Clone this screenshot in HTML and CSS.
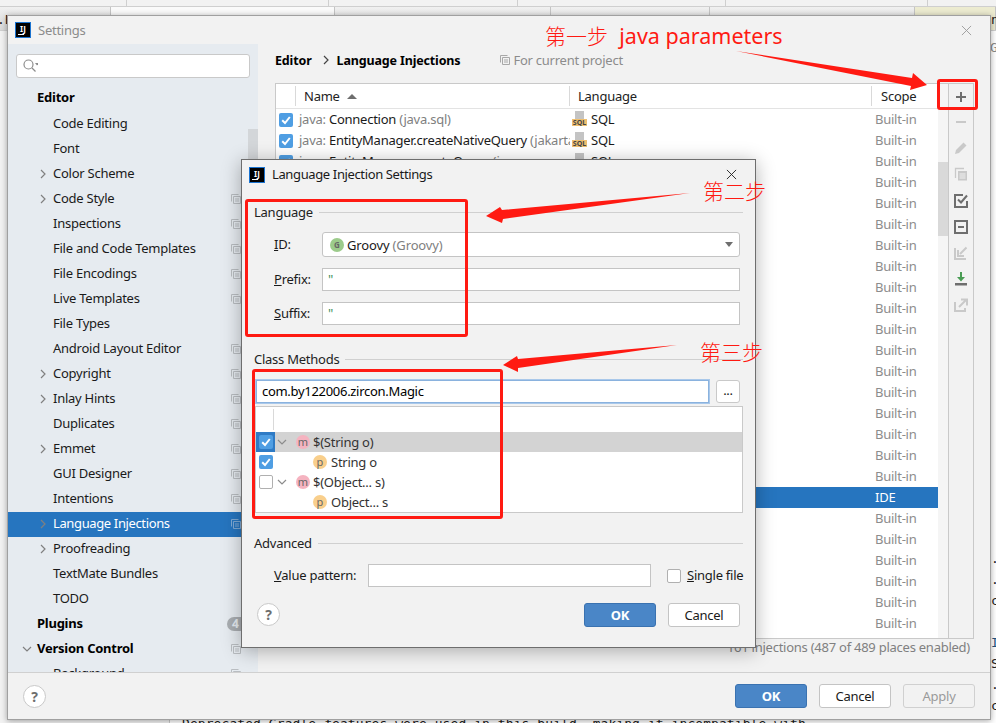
FILE: index.html
```html
<!DOCTYPE html>
<html lang="en">
<head>
    <meta charset="UTF-8">
    <meta name="viewport" content="width=device-width, initial-scale=1.0">
    <title>Language Injection Settings</title>
    <link rel="stylesheet" href="styles.css">
</head>
<body>
<svg class="defs" width="0" height="0">
    <symbol id="proj" viewBox="0 0 10 10"><path d="M.5 7.5V.5h7M2.500 2.500h7v7h-7zM4 5h4M4 7h4" fill="none" stroke="currentColor"/></symbol>
    <symbol id="right" viewBox="0 0 10 10"><path d="M3 1l4 4-4 4" fill="none" stroke="currentColor" stroke-width="1.2"/></symbol>
    <symbol id="down" viewBox="0 0 10 10"><path d="M1 3l4 4 4-4" fill="none" stroke="currentColor" stroke-width="1.2"/></symbol>
    <symbol id="tick" viewBox="0 0 14 14"><path d="M3.2 7.2l2.8 2.8 4.8-6" fill="none" stroke="#fff" stroke-width="2"/></symbol>
</svg>

<div class="desktop">
    <!-- stuff behind the windows -->
    <div class="backdrop">
        <div class="tabs-top"><i class="w127"></i><i class="w202"></i><i class="w189"></i><i class="w208"></i><i class="w202"></i></div>
        <div class="tabs-second">
            <i class="tab-a"></i><i class="tab-b"></i><i class="tab-c"></i><i class="tab-d"></i><i class="tab-e"></i><i class="tab-y"></i>
        </div>
        <div class="console">
            <div class="console-left"></div>
            <div class="console-text">Deprecated Gradle features were used in this build, making it incompatible with</div>
        </div>
    </div>
    <div class="edge-left">.E</div>
    <div class="edge-top">n</div>
    <div class="edge-g">G</div>
    <div class="edge-log">
        <div>.-</div><div>.E</div><div>c</div><div>&nbsp;</div><div class="log-blue">II</div><div>S</div><div>.-</div><div>c</div>
    </div>

    <!-- Settings window -->
    <div class="win settings">
        <div class="titlebar">
            <span class="ij">IJ<b></b></span>
            <span class="settings-title">Settings</span>
            <svg class="close close-gray" viewBox="0 0 12 12"><path d="M1 1l10 10M11 1L1 11" stroke="currentColor" fill="none"/></svg>
        </div>
        <div class="settings-body">
            <div class="sidebar">
                <div class="search">
                    <svg width="16" height="16" viewBox="0 0 16 16"><circle cx="6.5" cy="6.5" r="4.5" fill="none" stroke="#8c8c8c" stroke-width="1.2"/><path d="M10 10l3.5 3.5" stroke="#8c8c8c" stroke-width="1.2"/><path d="M13 5h4l-2 2.5z" fill="#8c8c8c"/></svg>
                </div>
                <div class="sb-thumb"></div>
                <div class="tree">
                    <div class="node bold top first">Editor</div>
                    <div class="node">Code Editing</div>
                    <div class="node">Font</div>
                    <div class="node"><svg class="arr"><use href="#right"/></svg>Color Scheme</div>
                    <div class="node"><svg class="arr"><use href="#right"/></svg>Code Style<svg class="pi"><use href="#proj"/></svg></div>
                    <div class="node">Inspections<svg class="pi"><use href="#proj"/></svg></div>
                    <div class="node">File and Code Templates<svg class="pi"><use href="#proj"/></svg></div>
                    <div class="node">File Encodings<svg class="pi"><use href="#proj"/></svg></div>
                    <div class="node">Live Templates<svg class="pi"><use href="#proj"/></svg></div>
                    <div class="node">File Types</div>
                    <div class="node">Android Layout Editor<svg class="pi"><use href="#proj"/></svg></div>
                    <div class="node"><svg class="arr"><use href="#right"/></svg>Copyright<svg class="pi"><use href="#proj"/></svg></div>
                    <div class="node"><svg class="arr"><use href="#right"/></svg>Inlay Hints<svg class="pi"><use href="#proj"/></svg></div>
                    <div class="node">Duplicates<svg class="pi"><use href="#proj"/></svg></div>
                    <div class="node"><svg class="arr"><use href="#right"/></svg>Emmet<svg class="pi"><use href="#proj"/></svg></div>
                    <div class="node">GUI Designer<svg class="pi"><use href="#proj"/></svg></div>
                    <div class="node">Intentions<svg class="pi"><use href="#proj"/></svg></div>
                    <div class="node selected"><svg class="arr"><use href="#right"/></svg>Language Injections<svg class="pi"><use href="#proj"/></svg></div>
                    <div class="node"><svg class="arr"><use href="#right"/></svg>Proofreading</div>
                    <div class="node">TextMate Bundles</div>
                    <div class="node">TODO</div>
                    <div class="node bold top">Plugins<span class="badge">4</span></div>
                    <div class="node bold top"><svg class="arr"><use href="#down"/></svg>Version Control<svg class="pi"><use href="#proj"/></svg></div>
                    <div class="node">Background<svg class="pi"><use href="#proj"/></svg></div>
                </div>
            </div>
            <div class="main">
                <div class="crumbs">
                    <b>Editor</b>
                    <svg class="crumb-arr"><use href="#right"/></svg>
                    <b>Language Injections</b>
                    <span class="for-project"><svg class="pi-static"><use href="#proj"/></svg>For current project</span>
                </div>
                <div class="panel">
                    <div class="list">
                        <div class="list-thumb"></div>
                        <div class="row head">
                            <div class="c-check"></div>
                            <div class="c-name">Name <span class="sort"></span></div>
                            <div class="c-lang">Language</div>
                            <div class="c-scope">Scope</div>
                        </div>
                        <div class="row">
                            <div class="c-check"><span class="check on"><svg><use href="#tick"/></svg></span></div>
                            <div class="c-name"><span class="gray">java:</span> Connection <span class="gray">(java.sql)</span></div>
                            <div class="c-lang"><span class="sql"><i></i><em>SQL</em></span>SQL</div>
                            <div class="c-scope">Built-in</div>
                        </div>
                        <div class="row">
                            <div class="c-check"><span class="check on"><svg><use href="#tick"/></svg></span></div>
                            <div class="c-name"><span class="gray">java:</span> EntityManager.createNativeQuery <span class="gray">(jakarta</span></div>
                            <div class="c-lang"><span class="sql"><i></i><em>SQL</em></span>SQL</div>
                            <div class="c-scope">Built-in</div>
                        </div>
                        <div class="row">
                            <div class="c-check"><span class="check on"><svg><use href="#tick"/></svg></span></div>
                            <div class="c-name"><span class="gray">java:</span> EntityManager.createQuery <span class="gray">(j</span></div>
                            <div class="c-lang"><span class="sql"><i></i><em>SQL</em></span>SQL</div>
                            <div class="c-scope">Built-in</div>
                        </div>
                        <div class="row"><div class="c-scope">Built-in</div></div>
                        <div class="row"><div class="c-scope">Built-in</div></div>
                        <div class="row"><div class="c-scope">Built-in</div></div>
                        <div class="row"><div class="c-scope">Built-in</div></div>
                        <div class="row"><div class="c-scope">Built-in</div></div>
                        <div class="row"><div class="c-scope">Built-in</div></div>
                        <div class="row"><div class="c-scope">Built-in</div></div>
                        <div class="row"><div class="c-scope">Built-in</div></div>
                        <div class="row"><div class="c-scope">Built-in</div></div>
                        <div class="row"><div class="c-scope">Built-in</div></div>
                        <div class="row"><div class="c-scope">Built-in</div></div>
                        <div class="row"><div class="c-scope">Built-in</div></div>
                        <div class="row"><div class="c-scope">Built-in</div></div>
                        <div class="row"><div class="c-scope">Built-in</div></div>
                        <div class="row"><div class="c-scope">Built-in</div></div>
                        <div class="row picked"><div class="c-scope">IDE</div></div>
                        <div class="row"><div class="c-scope">Built-in</div></div>
                        <div class="row"><div class="c-scope">Built-in</div></div>
                        <div class="row"><div class="c-scope">Built-in</div></div>
                        <div class="row"><div class="c-scope">Built-in</div></div>
                        <div class="row"><div class="c-scope">Built-in</div></div>
                        <div class="row"><div class="c-scope">Built-in</div></div>
                    </div>
                    <div class="toolbar">
                        <svg class="tool t-add" viewBox="0 0 16 16"><path d="M3 8h10M8 3v10" stroke="#6e6e6e" stroke-width="2"/></svg>
                        <svg class="tool" viewBox="0 0 16 16"><path d="M3 8h10" stroke="#c9c9c9" stroke-width="2"/></svg>
                        <svg class="tool" viewBox="0 0 16 16"><path d="M2 14l1-4 7.500-7.500 3 3L6 13z" fill="#c9c9c9"/></svg>
                        <svg class="tool t-copy" viewBox="0 0 16 16"><path d="M2.500 12V2.500H11" fill="none" stroke="#c9c9c9" stroke-width="1.300"/><path d="M5 5h9v9.500H5z" fill="#c9c9c9"/><path d="M6.500 8h6M6.500 10h6M6.500 12h6" stroke="#f2f2f2"/></svg>
                        <svg class="tool" viewBox="0 0 16 16"><path d="M14 8v6H2V2h8" fill="none" stroke="#6e6e6e" stroke-width="2"/><path d="M5 6.500l3 3 6-7" fill="none" stroke="#6e6e6e" stroke-width="2"/></svg>
                        <svg class="tool" viewBox="0 0 16 16"><path d="M2 2h12v12H2zM5 8h6" fill="none" stroke="#6e6e6e" stroke-width="2"/></svg>
                        <svg class="tool" viewBox="0 0 16 16"><path d="M2 3v11h11" fill="none" stroke="#c9c9c9" stroke-width="2"/><path d="M13.500 2.500L7 9M5 5v6h6" fill="none" stroke="#c9c9c9" stroke-width="2"/></svg>
                        <svg class="tool" viewBox="0 0 16 16"><path d="M8 1v7" stroke="#499c54" stroke-width="2"/><path d="M4 6h8l-4 4.500z" fill="#499c54"/><path d="M2 12h12v2.500H2z" fill="#6e6e6e"/></svg>
                        <svg class="tool" viewBox="0 0 16 16"><path d="M2 5v9h10v-3" fill="none" stroke="#c9c9c9" stroke-width="2"/><path d="M6 10l7-7M8 2.500h6v6" fill="none" stroke="#c9c9c9" stroke-width="2"/></svg>
                    </div>
                </div>
                <div class="status">161 injections (487 of 489 places enabled)</div>
            </div>
        </div>
        <div class="footer">
            <span class="help">?</span>
            <span class="btn primary">OK</span>
            <span class="btn">Cancel</span>
            <span class="btn disabled">Apply</span>
        </div>
    </div>

    <!-- Language Injection Settings dialog -->
    <div class="win dialog">
        <div class="dlg-title">
            <span class="ij">IJ<b></b></span>
            <span class="dlg-name">Language Injection Settings</span>
            <svg class="close" viewBox="0 0 12 12"><path d="M1 1l10 10M11 1L1 11" stroke="#222" fill="none"/></svg>
        </div>
        <div class="dlg-body">
            <div class="group"><span>Language</span><i></i></div>
            <div class="lang-form">
                <label><u>I</u>D:</label>
                <div class="combo"><span class="round green">G</span>Groovy&nbsp;<span class="gray">(Groovy)</span><span class="caret"></span></div>
                <label><u>P</u>refix:</label>
                <div class="field"><span class="quote">"</span></div>
                <label><u>S</u>uffix:</label>
                <div class="field"><span class="quote">"</span></div>
            </div>
            <div class="group methods-title"><span>Class Methods</span><i></i></div>
            <div class="class-row">
                <div class="class-input">com.by122006.zircon.Magic</div>
                <span class="dots">...</span>
            </div>
            <div class="mtree">
                <div class="mhead"><i></i></div>
                <div class="mrow current">
                    <span class="mcheck"><span class="check on"><svg><use href="#tick"/></svg></span></span>
                    <svg class="marr"><use href="#down"/></svg>
                    <span class="round pink">m</span>$(String o)
                </div>
                <div class="mrow">
                    <span class="mcheck"><span class="check on"><svg><use href="#tick"/></svg></span></span>
                    <span class="mgap"></span>
                    <span class="round orange">p</span>String o
                </div>
                <div class="mrow">
                    <span class="mcheck"><span class="check"></span></span>
                    <svg class="marr"><use href="#down"/></svg>
                    <span class="round pink">m</span>$(Object... s)
                </div>
                <div class="mrow">
                    <span class="mcheck"></span>
                    <span class="mgap"></span>
                    <span class="round orange">p</span>Object... s
                </div>
            </div>
            <div class="group advanced-title"><span>Advanced</span><i></i></div>
            <div class="adv-row">
                <label><u>V</u>alue pattern:</label>
                <div class="field"></div>
                <span class="check"></span>
                <label><u>S</u>ingle file</label>
            </div>
        </div>
        <div class="dlg-foot">
            <span class="help">?</span>
            <span class="btn primary">OK</span>
            <span class="btn">Cancel</span>
        </div>
    </div>

    <!-- red notes drawn on the screenshot -->
    <svg class="arrows" viewBox="0 0 996 723">
        <path d="M736 51L912 78 913 73 927 85 910 90 911 86z"/>
        <path d="M690 193L502 210 500 207 486 216 502 223 503 219z"/>
        <path d="M677 345L518 359 517 356 503 365 518 372 518 368z"/>
    </svg>
    <div class="red-box box-add"></div>
    <div class="red-box box-lang"></div>
    <div class="red-box box-class"></div>
    <div class="note note-1">第一步&nbsp;&nbsp;<span>java parameters</span></div>
    <div class="note note-2">第二步</div>
    <div class="note note-3">第三步</div>
</div>
</body>
</html>
```

FILE: styles.css
```css
* {
    box-sizing: border-box;
}
html, body {
    margin: 0;
    padding: 0;
}
body {
    font-family: "Noto Sans", "Noto Sans CJK SC", sans-serif;
    font-size: 13px;
    letter-spacing: -.25px;
    color: #1a1a1a;
    background: #fff;
}
label {
    display: block;
    white-space: nowrap;
    padding-bottom: 2px;
}
.defs {
    position: absolute;
}
.gray {
    color: #808080;
}
.desktop {
    position: relative;
    width: 996px;
    height: 723px;
    overflow: hidden;
}

/* behind the windows */
.backdrop {
    display: flex;
    flex-direction: column;
    height: 723px;
}
.tabs-top {
    display: flex;
    height: 7px;
    background: #f2f2f2;
    border-bottom: 1px solid #cfcfcf;
}
.tabs-top i {
    border-right: 1px solid #cfcfcf;
}
.w127 { width: 127px; }
.w202 { width: 202px; }
.w189 { width: 189px; }
.w208 { width: 208px; }
.tabs-second {
    display: flex;
    height: 24px;
    border-bottom: 1px solid #cfcfcf;
}
.tabs-second i {
    background: linear-gradient(#f0f0f0, #d9d9d9);
    border-right: 1px solid #c4c4c4;
}
.tabs-second .tab-a { width: 111px; }
.tabs-second .tab-b { width: 224px; background: #fafafa; }
.tabs-second .tab-c { width: 216px; }
.tabs-second .tab-d { width: 159px; }
.tabs-second .tab-e { width: 205px; }
.tabs-second .tab-y { flex: 1; background: #ecebd0; }
.console {
    flex: 1;
    display: flex;
    align-items: flex-end;
}
.console-left {
    width: 170px;
    height: 100%;
    background: #f2f2f2;
    border-right: 1px solid #c9c9c9;
}
.console-text {
    margin-left: 12px;
    margin-bottom: -9px;
    font-family: "DejaVu Sans Mono", monospace;
    font-size: 13px;
    line-height: 16px;
    letter-spacing: .07px;
    white-space: nowrap;
    width: 640px;
    overflow: hidden;
}
.edge-left, .edge-top, .edge-g, .edge-log {
    position: absolute;
    font-family: "DejaVu Sans Mono", monospace;
    font-size: 13px;
    letter-spacing: 0;
    color: #222;
}
.edge-left { left: -3px; top: 12px; }
.edge-top { left: 991px; top: 12px; }
.edge-g { left: 990px; top: 40px; color: #888; }
.edge-log {
    left: 991px;
    top: 548px;
    line-height: 21px;
}
.log-blue { color: #23537f; }

/* windows */
.win {
    position: absolute;
    background: #f2f2f2;
    display: flex;
    flex-direction: column;
}
.settings {
    left: 7px;
    top: 15px;
    width: 984px;
    height: 705px;
    border: 1px solid #a0a0a0;
    box-shadow: 0 1px 6px rgba(0, 0, 0, .35);
}
.titlebar {
    height: 28px;
    display: flex;
    align-items: center;
    padding-left: 7px;
    flex: none;
}
.ij {
    position: relative;
    width: 16px;
    height: 16px;
    flex: none;
    background: #000;
    border: 1px solid #1a73d0;
    color: #fff;
    font-size: 8px;
    font-weight: 700;
    letter-spacing: 0;
    line-height: 11px;
    text-align: center;
    margin-right: 7px;
}
.ij b {
    position: absolute;
    left: 2px;
    bottom: 2px;
    width: 6px;
    height: 1px;
    background: #fff;
}
.settings-title {
    color: #8c8c8c;
}
.close {
    margin-left: auto;
    width: 11px;
    height: 11px;
}
.close-gray {
    color: #9a9a9a;
    margin-right: 18px;
}
.settings-body {
    flex: 1;
    display: flex;
    min-height: 0;
}
.sidebar {
    position: relative;
    width: 250px;
    flex: none;
    background: #e6ebf0;
    overflow: hidden;
}
.search {
    margin: 10px 8px 0;
    height: 24px;
    background: #fff;
    border: 1px solid #c9c9c9;
    border-radius: 3px;
    padding: 3px 0 0 5px;
    display: flex;
}
.sb-thumb {
    position: absolute;
    right: 0;
    top: 85px;
    width: 10px;
    height: 200px;
    background: #d3d6d9;
}
.tree {
    margin-top: 8px;
}
.node {
    position: relative;
    height: 25px;
    line-height: 23px;
    padding-left: 45px;
    white-space: nowrap;
}
.node.top {
    padding-left: 29px;
}
.node.first {
    height: 26px;
    line-height: 22px;
}
.bold {
    font-weight: 700;
    color: #000;
}
.node.selected {
    background: #2675bf;
    color: #fff;
    letter-spacing: -.37px;
}
.arr {
    position: absolute;
    left: 30px;
    top: 7px;
    width: 10px;
    height: 10px;
    color: #808080;
}
.node.top .arr {
    left: 14px;
}
.pi {
    position: absolute;
    right: 17px;
    top: 7px;
    width: 10px;
    height: 10px;
    color: #b9bdc1;
}
.selected .pi {
    color: #7fa9d3;
}
.badge {
    position: absolute;
    left: 219px;
    top: 5px;
    width: 24px;
    height: 14px;
    border-radius: 7px;
    background: #a9adb1;
    color: #e6ebf0;
    font-size: 12px;
    line-height: 14px;
    padding-left: 5px;
}
.main {
    flex: 1;
    min-width: 0;
    display: flex;
    flex-direction: column;
    padding: 0 16px 0 17px;
}
.crumbs {
    height: 39px;
    display: flex;
    align-items: center;
    padding-bottom: 7px;
    color: #000;
}
.crumbs b {
    font-weight: 700;
    font-size: 12.5px;
    letter-spacing: -.15px;
}
.crumb-arr {
    width: 10px;
    height: 10px;
    margin: 0 6px 0 9px;
    color: #444;
}
.for-project {
    display: flex;
    align-items: center;
    margin-left: 40px;
    color: #8c8c8c;
}
.pi-static {
    width: 10px;
    height: 10px;
    margin-right: 3px;
    color: #a8a8a8;
}
.panel {
    height: 556px;
    display: flex;
    border: solid #c9c9c9;
    border-width: 1px 0 1px 1px;
    flex: none;
}
.list {
    position: relative;
    flex: 1;
    min-width: 0;
    overflow: hidden;
    background: linear-gradient(90deg, #fff 662px, #f5f5f5 662px);
}
.list-thumb {
    position: absolute;
    right: 0;
    top: 78px;
    width: 10px;
    height: 74px;
    background: #d9d9d9;
}
.row {
    display: flex;
    height: 21px;
    line-height: 20px;
    white-space: nowrap;
    width: 662px;
}
.row.head {
    height: 25px;
    line-height: 24px;
    border-bottom: 1px solid #e3e3e3;
    color: #222;
    background: #fff;
}
.row.picked {
    background: #2675bf;
}
.picked .c-scope {
    color: #fff;
}
.c-check {
    width: 20px;
    flex: none;
    padding: 3px 0 0 3px;
}
.c-name {
    width: 274px;
    flex: none;
    overflow: hidden;
    padding-left: 3px;
}
.c-lang {
    width: 302px;
    flex: none;
    display: flex;
    padding-left: 2px;
}
.c-scope {
    margin-left: auto;
    width: 66px;
    flex: none;
    padding-left: 3px;
    color: #8c8c8c;
}
.head .c-check {
    border-right: 1px solid #d9d9d9;
    margin: 2px 0;
}
.head .c-name {
    padding-left: 8px;
    margin: 2px 0;
    line-height: 20px;
    border-right: 1px solid #d9d9d9;
}
.head .c-lang {
    padding-left: 8px;
    margin: 2px 0;
    line-height: 20px;
    border-right: 1px solid #d9d9d9;
}
.head .c-scope {
    color: #222;
    padding-left: 9px;
    margin: 2px 0;
    line-height: 20px;
}
.sort {
    display: inline-block;
    margin-left: 4px;
    vertical-align: 2px;
    border: 5px solid transparent;
    border-top: 0;
    border-bottom: 5px solid #6e6e6e;
}
.check {
    display: inline-block;
    width: 14px;
    height: 14px;
    flex: none;
    border: 1px solid #b0b0b0;
    border-radius: 2px;
    background: #fff;
}
.check.on {
    background: #4f9ee3;
    border: 0;
}
.check svg {
    display: block;
    width: 14px;
    height: 14px;
}
.sql {
    position: relative;
    width: 15px;
    height: 16px;
    margin: 2px 4px 0 0;
    flex: none;
}
.sql i {
    position: absolute;
    left: 3px;
    top: 0;
    width: 9px;
    height: 9px;
    background: #c4c4c4;
}
.sql em {
    position: absolute;
    left: 0;
    bottom: 1px;
    width: 15px;
    height: 7px;
    background: #eebf70;
    font-style: normal;
    font-weight: 700;
    font-size: 7px;
    letter-spacing: 0;
    line-height: 7px;
    text-align: center;
    color: #444;
}
.toolbar {
    width: 26px;
    flex: none;
    display: flex;
    flex-direction: column;
    align-items: center;
    border: solid #c9c9c9;
    border-width: 0 1px;
    padding-top: 3px;
}
.tool {
    width: 16px;
    height: 16px;
    flex: none;
    margin: 2px 0 8px;
}
.t-add {
    margin-bottom: 7px;
}
.t-copy {
    margin-bottom: 9px;
}
.status {
    height: 20px;
    line-height: 17px;
    text-align: right;
    color: #808080;
    padding-right: 4px;
}
.footer {
    height: 47px;
    flex: none;
    border-top: 1px solid #d0d0d0;
    display: flex;
    align-items: center;
    padding: 0 15px 0 15px;
    gap: 12px;
}
.help {
    width: 23px;
    height: 23px;
    border: 1px solid #c9c9c9;
    border-radius: 50%;
    background: #fff;
    color: #6e6e6e;
    font-weight: 700;
    font-size: 14px;
    line-height: 21px;
    text-align: center;
    margin-right: auto;
    flex: none;
}
.btn {
    width: 72px;
    height: 24px;
    border: 1px solid #c4c4c4;
    border-radius: 3px;
    background: #fff;
    color: #1a1a1a;
    text-align: center;
    line-height: 22px;
    flex: none;
}
.btn.primary {
    background: #4a86c7;
    border-color: #3a72b0;
    color: #fff;
    font-weight: 700;
}
.btn.disabled {
    background: #f2f2f2;
    color: #9a9a9a;
    border-color: #d0d0d0;
}

/* dialog */
.dialog {
    left: 241px;
    top: 159px;
    width: 515px;
    height: 489px;
    border: 1px solid #6e6e6e;
    box-shadow: 0 3px 18px rgba(0, 0, 0, .3);
}
.dlg-title {
    height: 29px;
    display: flex;
    align-items: center;
    padding: 0 18px 0 7px;
    flex: none;
}
.dlg-name {
    letter-spacing: -.37px;
    padding-bottom: 2px;
}
.dlg-title .ij {
    margin-right: 7px;
}
.dlg-body {
    flex: 1;
    padding: 14px 12px 0;
}
.group {
    display: flex;
    align-items: center;
    gap: 6px;
    height: 18px;
    color: #222;
}
.group i {
    flex: 1;
    height: 1px;
    background: #d0d0d0;
}
.lang-form {
    display: grid;
    grid-template-columns: 48px 418px;
    grid-template-rows: 25px 23px 23px;
    row-gap: 11px;
    align-items: center;
    margin: 11px 0 0 20px;
}
.combo, .field {
    height: 100%;
    background: #fff;
    border: 1px solid #c4c4c4;
}
.combo {
    display: flex;
    align-items: center;
    border-radius: 3px;
    padding-left: 7px;
    letter-spacing: -.15px;
}
.round {
    width: 14px;
    height: 14px;
    border-radius: 50%;
    flex: none;
    font-size: 10px;
    letter-spacing: 0;
    line-height: 13px;
    text-align: center;
    color: #666;
    margin-right: 3px;
}
.green {
    background: #9ccb8b;
    font-weight: 700;
    font-size: 8px;
}
.pink {
    background: #f5b3c0;
}
.orange {
    background: #f9cf8c;
}
.caret {
    margin-left: auto;
    margin-right: 6px;
    border: 4px solid transparent;
    border-top: 5px solid #6e6e6e;
    border-bottom: 0;
}
.field {
    padding-left: 5px;
    line-height: 20px;
}
.quote {
    color: #3d8f5a;
}
.methods-title {
    margin-top: 25px;
}
.class-row {
    display: flex;
    align-items: center;
    margin: 12px 3px 0 2px;
    gap: 7px;
}
.class-input {
    flex: 1;
    height: 23px;
    background: #fff;
    border: 1px solid #8ab2de;
    box-shadow: 0 0 0 1px #a9c8ea;
    line-height: 21px;
    padding-left: 5px;
    letter-spacing: -.3px;
    color: #000;
}
.dots {
    width: 24px;
    height: 23px;
    background: #fff;
    border: 1px solid #c9c9c9;
    border-radius: 3px;
    text-align: center;
    line-height: 18px;
    flex: none;
}
.mtree {
    height: 107px;
    margin: 3px 0 0 1px;
    background: #fff;
    border: 1px solid #c9c9c9;
}
.mhead {
    height: 25px;
    padding: 2px 0;
}
.mhead i {
    display: block;
    width: 18px;
    height: 100%;
    border-right: 1px solid #d9d9d9;
}
.mrow {
    display: flex;
    align-items: center;
    height: 20px;
    color: #333;
}
.mrow.current {
    background: #d3d3d3;
}
.mcheck {
    width: 19px;
    height: 100%;
    flex: none;
    display: flex;
    align-items: center;
    justify-content: center;
}
.current .mcheck {
    background: #2f7bc5;
}
.marr {
    width: 10px;
    height: 10px;
    margin: 0 9px 0 2px;
    color: #8c8c8c;
    flex: none;
}
.mgap {
    width: 38px;
    flex: none;
}
.mrow .round {
    font-size: 11px;
}
.mgap + .round {
    margin-right: 4px;
}
.advanced-title {
    margin-top: 21px;
}
.adv-row {
    display: flex;
    align-items: center;
    height: 23px;
    margin: 12px 0 0 20px;
}
.adv-row .field {
    width: 283px;
    height: 23px;
    flex: none;
    margin-right: 16px;
}
.adv-row label:first-child {
    width: 94px;
    flex: none;
}
.adv-row .check {
    margin-right: 6px;
}
.dlg-foot {
    height: 48px;
    flex: none;
    display: flex;
    align-items: flex-start;
    padding: 4px 15px 0 15px;
    gap: 12px;
}

/* red annotations */
.arrows {
    position: absolute;
    left: 0;
    top: 0;
    width: 996px;
    height: 723px;
    fill: #ff1a12;
}
.red-box {
    position: absolute;
    border: 3px solid #ff1a12;
    border-radius: 3px;
}
.box-add { left: 937px; top: 79px; width: 41px; height: 31px; }
.box-lang { left: 245px; top: 199px; width: 223px; height: 138px; }
.box-class { left: 252px; top: 369px; width: 251px; height: 150px; }
.note {
    position: absolute;
    color: #ff1a12;
    font-family: "Noto Sans CJK SC", sans-serif;
    font-weight: 300;
    font-size: 21px;
    letter-spacing: 0;
    line-height: 28px;
    white-space: nowrap;
}
.note span {
    font-family: "Noto Sans", sans-serif;
    font-weight: 400;
    font-size: 21.5px;
    margin-left: 2px;
}
.note-1 { left: 545px; top: 21px; }
.note-2 { left: 703px; top: 176px; }
.note-3 { left: 700px; top: 337px; }
```
